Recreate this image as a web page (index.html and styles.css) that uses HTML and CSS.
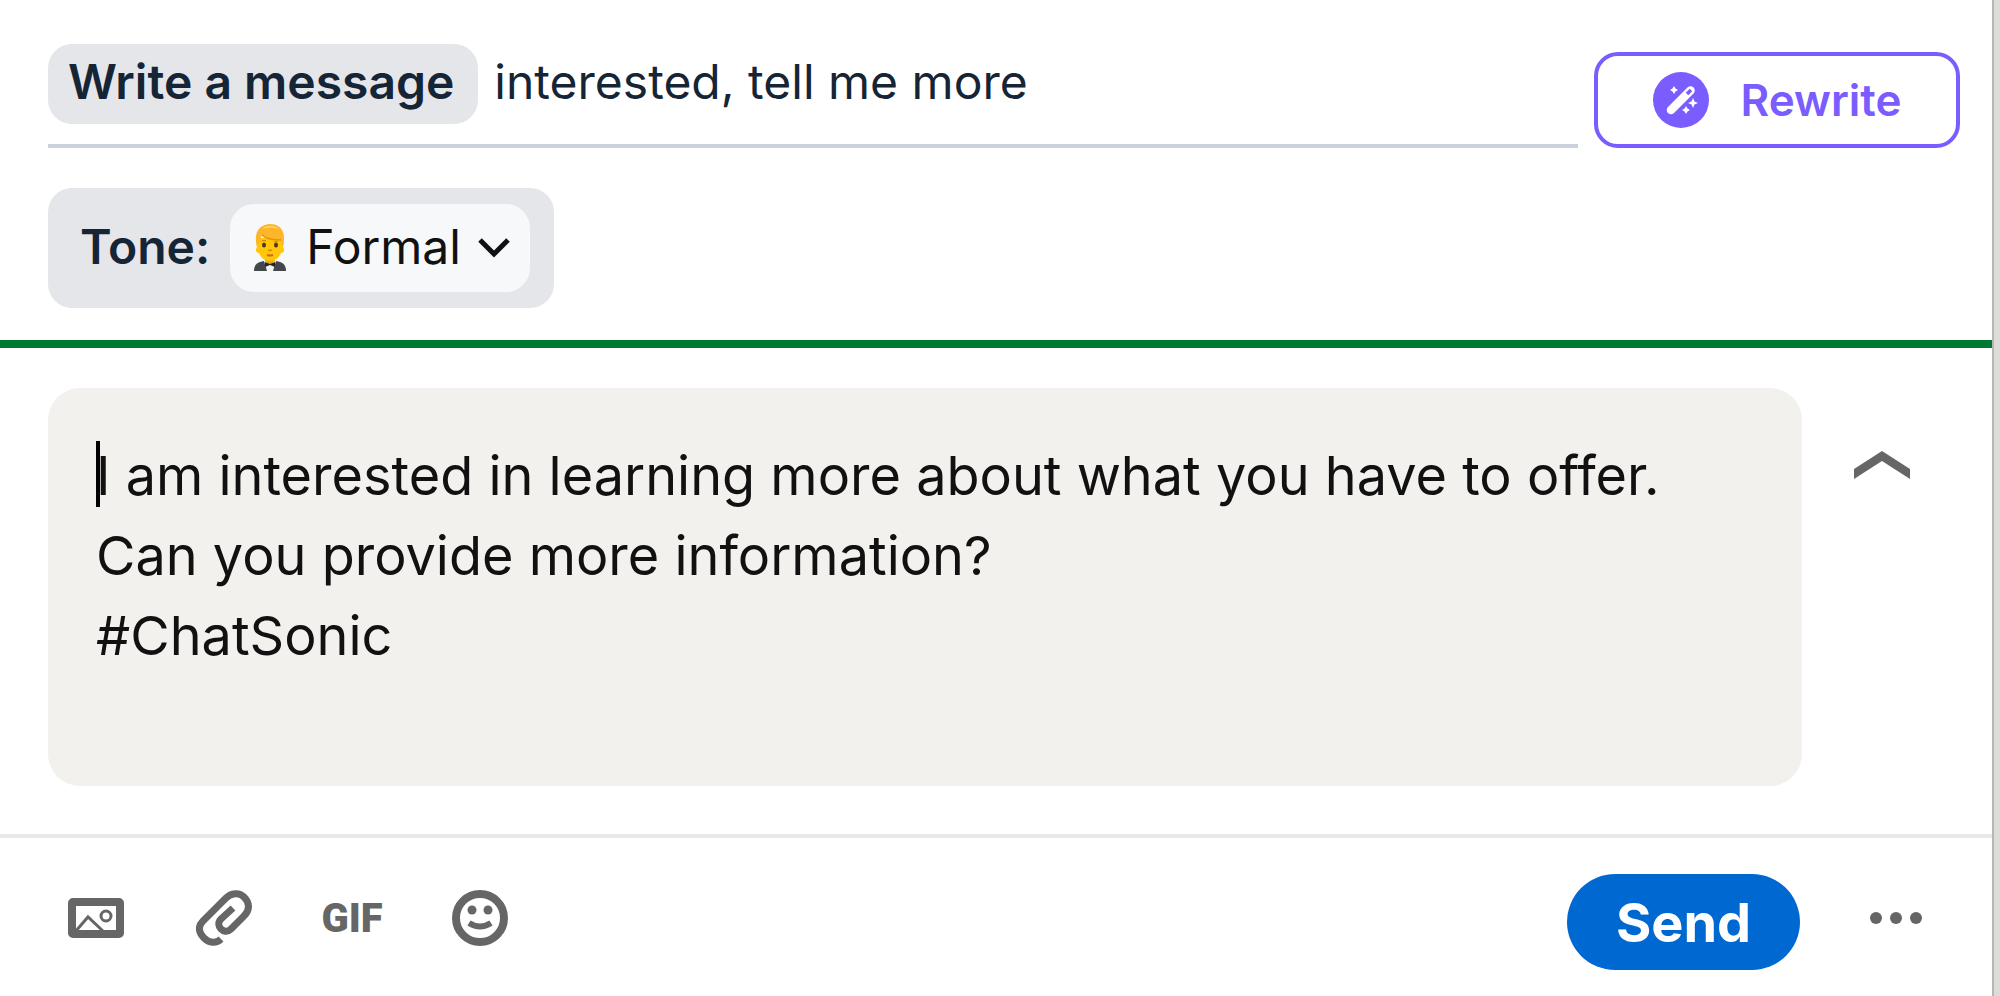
FILE: index.html
```html
<!DOCTYPE html>
<html lang="en">
<head>
<meta charset="UTF-8">
<meta name="viewport" content="width=device-width, initial-scale=1.0">
<title>Write a message</title>
<link rel="stylesheet" href="styles.css">
</head>
<body>
<main class="panel">
    <section class="assistant">
        <div class="prompt-row">
            <div class="prompt">
                <label class="prompt-label" for="prompt">Write a message</label>
                <input type="text" class="prompt-input" id="prompt" value="interested, tell me more">
            </div>
            <button type="button" class="rewrite">
                <svg class="icon" viewBox="0 0 56 56" aria-hidden="true">
                    <circle cx="28" cy="28" r="28" fill="#7a5cff"/>
                    <path d="M18 38 L37.500 18.500" stroke="#fff" stroke-width="8.500" stroke-linecap="round"/>
                    <path d="M34 22 L38 18" stroke="#7a5cff" stroke-width="3.500"/>
                    <path d="M21 14 l1.500 2.500 2.500 1.500 -2.500 1.500 -1.500 2.500 -1.500 -2.500 -2.500 -1.500 2.500 -1.500z M40 26 l1.500 3.500 3.500 1.500 -3.500 1.500 -1.500 3.500 -1.500 -3.500 -3.500 -1.500 3.500 -1.500z M33 34 l1.500 2.500 2.500 1.500 -2.500 1.500 -1.500 2.500 -1.500 -2.500 -2.500 -1.500 2.500 -1.500z" fill="#fff"/>
                </svg>
                Rewrite
            </button>
        </div>
        <div class="tone">
            <label class="tone-label" for="tone">Tone:</label>
            <div class="tone-box">
                <select class="tone-select" id="tone">
                    <option>Formal</option>
                </select>
                <svg class="tone-face" viewBox="0 0 34 48" aria-hidden="true">
                    <path d="M1 47 C1 40 5 38 11 37 H23 C29 38 33 40 33 47 Z" fill="#43464b"/>
                    <path d="M11 37 L14 47 H20 L23 37 Z" fill="#f4f4f4"/>
                    <path d="M12 32 H22 V37 L17 41 L12 37 Z" fill="#f2a600"/>
                    <path d="M12 38 L17 40 L22 38 V43 L17 41 L12 43 Z" fill="#26282b"/>
                    <path d="M5 14 C3 17 3 20 4 23 C2 26 3 29 6 29 C8 34 12 37 17 37 C22 37 26 34 28 29 C31 29 32 26 30 23 C31 20 31 17 29 14 Z" fill="#ffc60a"/>
                    <path d="M4 22 C1 11 4 1 17 0 C30 0 33 11 30 22 L28 16 C21 16 13 15 9 11 C8 14 6 15 6 18 Z" fill="#fdb52a"/>
                    <path d="M9 5 C13 1 22 1 26 5 C20 3 15 3 9 5 Z" fill="#ffe06a"/>
                    <path d="M9 11 C13 15 21 16 28 16" fill="none" stroke="#e8920c" stroke-width="1.500"/>
                    <path d="M9 17 Q11 16 13 17 M21 18 Q23 17 25 18" fill="none" stroke="#c77a0c" stroke-width="1"/>
                    <ellipse cx="11" cy="21" rx="2" ry="2.500" fill="#4f3522"/>
                    <ellipse cx="23" cy="21" rx="2" ry="2.500" fill="#4f3522"/>
                    <path d="M15 26 Q17 27 19 26" fill="none" stroke="#e08c00" stroke-width="1.500"/>
                    <path d="M14 31 Q17 32 20 31" fill="none" stroke="#d2691e" stroke-width="2"/>
                </svg>
                <svg class="tone-arrow" viewBox="0 0 32 20" aria-hidden="true">
                    <path d="M2 2 L16 16 L30 2" fill="none" stroke="#111" stroke-width="5"/>
                </svg>
            </div>
        </div>
    </section>

    <section class="composer">
        <div class="message">
            <textarea class="message-text" rows="4" aria-label="Message">I am interested in learning more about what you have to offer.
Can you provide more information?
#ChatSonic</textarea>
            <span class="caret"></span>
        </div>
        <button type="button" class="collapse" aria-label="Collapse">
            <svg class="icon" viewBox="0 0 56 56" aria-hidden="true">
                <path d="M0 18 L28 0 L56 18 V28 L28 10 L0 28 Z" fill="#666"/>
            </svg>
        </button>
    </section>

    <footer class="toolbar">
        <div class="tools">
            <button type="button" class="tool" aria-label="Attach an image">
                <svg class="icon" viewBox="0 0 56 56" fill="none" stroke="#666" aria-hidden="true">
                    <rect x="4" y="12" width="48" height="32" rx="1" stroke-width="8"/>
                    <path d="M7 42 L20 27 L36 42" stroke-width="3"/>
                    <circle cx="38" cy="26" r="5" stroke-width="3"/>
                </svg>
            </button>
            <button type="button" class="tool" aria-label="Attach a file">
                <svg class="icon" viewBox="0 0 56 56" fill="none" stroke="#666" stroke-width="7" aria-hidden="true">
                    <path d="M25 49 C20 54 13 53 8 48 C2 42 2 36 7 31 L30 8 C35 3 43 2 48 7 C54 13 54 20 48 26 L35 39 C31 43 27 41 25 39 C22 36 22 32 25 29 L37 18"/>
                </svg>
            </button>
            <button type="button" class="tool gif">GIF</button>
            <button type="button" class="tool" aria-label="Insert an emoji">
                <svg class="icon" viewBox="0 0 56 56" aria-hidden="true">
                    <circle cx="28" cy="28" r="24" fill="none" stroke="#666" stroke-width="8"/>
                    <circle cx="20" cy="20" r="4.500" fill="#666"/>
                    <circle cx="36" cy="20" r="4.500" fill="#666"/>
                    <path d="M17 33 Q28 40 39 33" fill="none" stroke="#666" stroke-width="6"/>
                </svg>
            </button>
        </div>
        <div class="actions">
            <button type="button" class="send">Send</button>
            <button type="button" class="tool" aria-label="More options">
                <svg class="icon" viewBox="0 0 56 56" fill="#666" aria-hidden="true">
                    <circle cx="8" cy="28" r="6"/>
                    <circle cx="28" cy="28" r="6"/>
                    <circle cx="48" cy="28" r="6"/>
                </svg>
            </button>
        </div>
    </footer>
</main>
</body>
</html>
```
FILE: styles.css
```css
* {
    box-sizing: border-box;
}
body {
    margin: 0;
    background: #dedcd8;
    font-family: Inter, "Liberation Sans", sans-serif;
}
button, input, select, textarea {
    font-family: inherit;
    margin: 0;
    padding: 0;
    border: none;
    background: none;
    outline: none;
}
button {
    cursor: pointer;
}
.panel {
    min-height: 100vh;
    margin-right: 6px;
    background: #fff;
    border-right: 2px solid #b9b7b3;
}
.icon {
    display: block;
    width: 56px;
    height: 56px;
}

/* prompt and tone */
.assistant {
    padding: 44px 32px 32px 48px;
}
.prompt-row {
    display: flex;
    align-items: flex-end;
    gap: 16px;
    margin-bottom: 40px;
}
.prompt {
    flex: 1;
    display: flex;
    align-items: baseline;
    gap: 16px;
    padding-bottom: 20px;
    border-bottom: 4px solid #cbd2dc;
}
.prompt-label {
    padding: 0 24px 4px 20px;
    border-radius: 24px;
    background: #e5e6ea;
    color: #152536;
    font-size: 48px;
    font-weight: 600;
    line-height: 76px;
    white-space: nowrap;
}
.prompt-input {
    flex: 1;
    min-width: 0;
    color: #152536;
    font-size: 48px;
}
.rewrite {
    display: flex;
    align-items: center;
    justify-content: center;
    gap: 32px;
    width: 366px;
    height: 96px;
    border: 4px solid #7a5cff;
    border-radius: 24px;
    color: #7a5cff;
    font-size: 44px;
    font-weight: 600;
}
.tone {
    display: inline-flex;
    align-items: center;
    gap: 20px;
    height: 120px;
    padding: 0 24px 0 32px;
    border-radius: 24px;
    background: #e5e6ea;
    vertical-align: top;
}
.tone-label {
    padding-bottom: 4px;
    color: #152536;
    font-size: 48px;
    font-weight: 600;
}
.tone-box {
    position: relative;
}
.tone-select {
    appearance: none;
    width: 300px;
    height: 88px;
    padding: 0 0 4px 76px;
    border-radius: 24px;
    background: #f7f8fa;
    color: #111;
    font-size: 48px;
}
.tone-face {
    position: absolute;
    left: 23px;
    top: 20px;
    width: 34px;
    height: 48px;
    pointer-events: none;
}
.tone-arrow {
    position: absolute;
    right: 20px;
    top: 34px;
    width: 32px;
    height: 20px;
    pointer-events: none;
}

/* message box */
.composer {
    display: flex;
    align-items: flex-start;
    gap: 52px;
    padding: 40px 82px 48px 48px;
    border-top: 8px solid #007a33;
}
.message {
    position: relative;
    flex: 1;
    padding: 48px;
    height: 398px;
    border-radius: 32px;
    background: #f3f1ed;
}
.message-text {
    display: block;
    width: 100%;
    height: 320px;
    resize: none;
    overflow: hidden;
    color: #111;
    font-size: 54px;
    line-height: 80px;
}
.caret {
    position: absolute;
    left: 48px;
    top: 53px;
    width: 4px;
    height: 66px;
    background: #000;
}
.collapse {
    margin-top: 63px;
}

/* bottom bar */
.toolbar {
    display: flex;
    justify-content: space-between;
    padding: 36px 68px 24px;
    border-top: 4px solid #e8e8e8;
}
.tools {
    display: flex;
    gap: 72px;
}
.actions {
    display: flex;
    gap: 68px;
}
.tool {
    width: 56px;
    height: 56px;
    margin-top: 16px;
}
.gif {
    display: flex;
    align-items: center;
    justify-content: center;
    color: #666;
    font-family: Roboto, "Liberation Sans", sans-serif;
    font-size: 40px;
    font-weight: 900;
}
.send {
    width: 233px;
    height: 96px;
    border-radius: 48px;
    background: #0069d1;
    color: #fff;
    font-size: 54px;
    font-weight: 700;
}
```
